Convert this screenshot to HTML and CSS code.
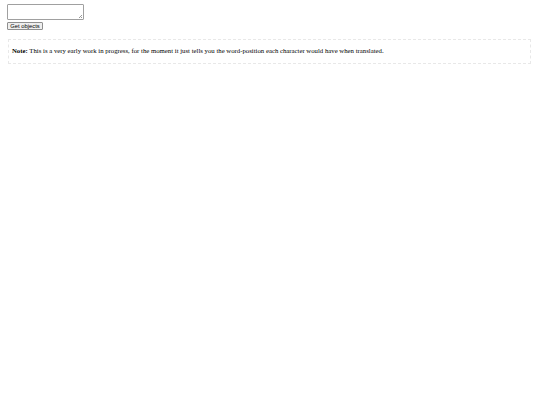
FILE: index.html
```html
<!DOCTYPE html>
<html>
<head>
<meta charset="utf-8">
<title>Word positions</title>
<link rel="stylesheet" href="styles.css">
</head>
<body>
<form class="form">
<span class="input-wrap"><textarea class="input"></textarea><span class="grip"></span></span>
<button type="button" class="btn">Get objects</button>
</form>
<div class="note">
<p class="note-text"><strong>Note:</strong> This is a very early work in progress, for the moment it just tells you the word-position each character would have when translated.</p>
</div>
</body>
</html>
```
FILE: styles.css
```css
html, body {
  margin: 0;
  padding: 0;
  background: #fff;
}
body {
  padding: 4px 9px 0 7px;
  font-family: "Liberation Serif", "Times New Roman", serif;
  color: #000;
}
.form {
  display: flex;
  flex-direction: column;
  align-items: flex-start;
  gap: 2px;
  margin: 0;
}
.input-wrap {
  position: relative;
  display: block;
  width: 77px;
  height: 15.5px;
}
.input {
  display: block;
  box-sizing: border-box;
  width: 77px;
  height: 15.5px;
  margin: 0;
  padding: 1px;
  border: 1px solid #a0a0a0;
  border-radius: 1px;
  font-family: "Liberation Mono", monospace;
  font-size: 6px;
  background: #fff;
  resize: none;
}
.grip {
  position: absolute;
  right: 2px;
  bottom: 2px;
  width: 3px;
  height: 3px;
  background: linear-gradient(135deg, transparent 45%, #9a9a9a 45%, #9a9a9a 60%, transparent 60%, transparent 75%, #9a9a9a 75%);
}
.btn {
  box-sizing: border-box;
  width: 36px;
  height: 8.5px;
  margin: 0;
  padding: 0;
  border: 1px solid #8f8f8f;
  border-radius: 1px;
  background: #efefef;
  font-family: "Liberation Sans", Arial, sans-serif;
  font-size: 5.8px;
  line-height: 6px;
  color: #000;
}
.note {
  margin: 8.5px 0 0 1px;
  padding: 0 3px;
  border: 1px dashed #e8e8e8;
}
.note-text {
  margin: 7.5px 0;
  font-size: 6.75px;
  line-height: 8px;
}
```
